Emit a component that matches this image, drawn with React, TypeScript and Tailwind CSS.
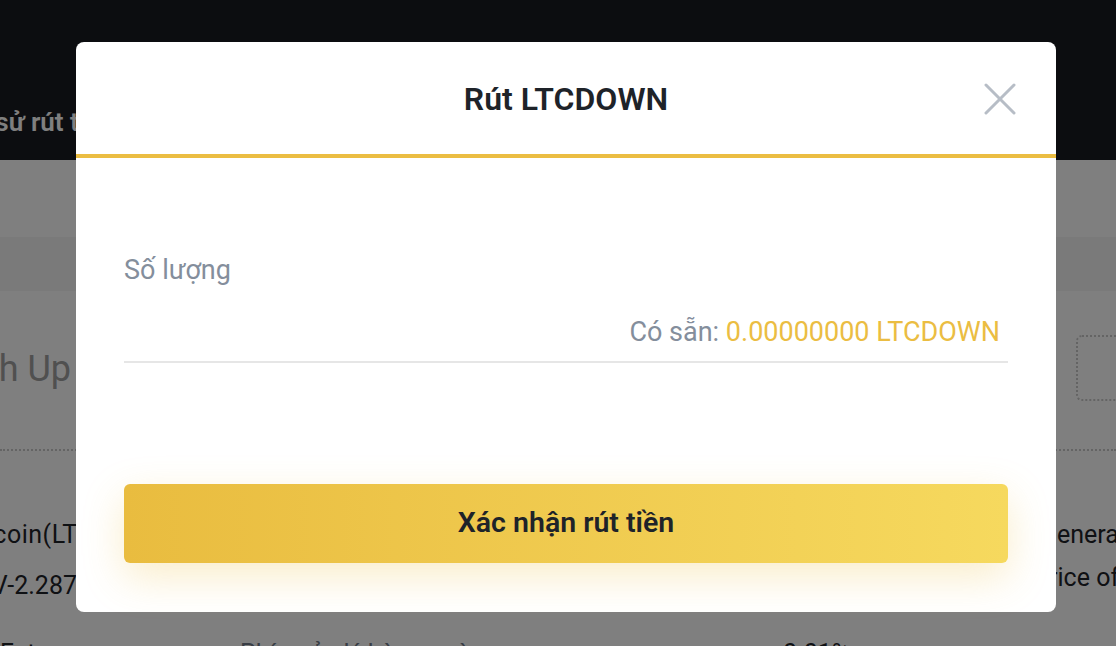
function BackgroundPage() {
  return (
    <div className="h-[646px] w-full overflow-hidden bg-white font-['Roboto',sans-serif]">
      {/* top header */}
      <div className="flex h-[160px] items-center bg-[#181a20] pt-[84px]">
        <div className="flex w-[114px] justify-end">
          <span className="shrink-0 whitespace-nowrap text-[26px] font-semibold text-white">Lịch sử rút tiền</span>
        </div>
      </div>
      <div className="h-[77px]" />
      <div className="h-[54px] bg-[#f5f5f5]" />

      {/* search row */}
      <div className="flex h-[160px] items-center justify-between border-b-2 border-dotted border-[#c8c8c8]">
        <div className="-mt-[2px] flex w-[71px] justify-end">
          <span className="shrink-0 whitespace-nowrap text-[36px] text-[#a0a0a0]">Tìm kiếm Flash Up</span>
        </div>
        <div className="-mr-[20px] mt-[-4px] h-[66px] w-[60px] rounded-md border-2 border-dotted border-[#c8c8c8]" />
      </div>

      {/* table rows */}
      <div className="flex justify-between pt-[65px] text-[25px] text-[#1e2329]">
        <div className="flex flex-col gap-[13px] whitespace-nowrap">
          <div className="flex w-[103px] justify-end">
            <span className="shrink-0 tracking-[0.5px]">Litecoin(LTC)</span>
          </div>
          <div className="flex w-[77px] justify-end">
            <span className="shrink-0">LTCDOWN-V-2.287</span>
          </div>
        </div>
        <div className="flex w-[73px] flex-col gap-[5px] whitespace-nowrap">
          <span>generated</span>
          <span className="-ml-[8px]">price of</span>
        </div>
      </div>
      <div className="mt-[31px] flex whitespace-nowrap text-[25px] text-[#1e2329]">
        <span className="w-[240px]">Futures</span>
        <span className="w-[543px] text-[#707a8a]">Phí quản lý hàng ngày</span>
        <span>0.01%</span>
      </div>
    </div>
  );
}

function WithdrawModal() {
  return (
    <div className="absolute left-[76px] top-[42px] w-[980px] rounded-lg bg-white font-['Roboto',sans-serif]">
      <div className="relative flex h-[116px] items-center justify-center border-b-4 border-[#ebbd42]">
        <h2 className="pt-[2px] text-[32px] font-semibold text-[#1e2329]">Rút LTCDOWN</h2>
        <button className="absolute right-[40px] top-[41px] text-[#b7bdc6]">
          <svg width="32" height="32" viewBox="0 0 32 32" fill="none" stroke="currentColor" strokeWidth="3" strokeLinecap="round">
            <line x1="2" y1="2" x2="30" y2="30" />
            <line x1="30" y1="2" x2="2" y2="30" />
          </svg>
        </button>
      </div>

      <div className="px-12 pt-[96px] pb-[49px]">
        <div className="h-8 text-[27px] leading-8 text-[#848e9c]">Số lượng</div>
        <div className="flex justify-end border-b-2 border-[#e6e6e6] pt-[30px] pb-[13px] pr-2">
          <span className="h-8 text-[27px] leading-8 text-[#848e9c]">
            Có sẵn: <span className="text-[#ebbd42]">0.00000000 LTCDOWN</span>
          </span>
        </div>
        <button className="mt-[121px] flex h-[79px] w-full items-center justify-center rounded-md bg-gradient-to-r from-[#e9bc3f] to-[#f6d95e] text-[28.5px] font-semibold text-[#1e2329] shadow-[0_14px_40px_rgba(236,190,66,0.28)]">
          Xác nhận rút tiền
        </button>
      </div>
    </div>
  );
}

export default function App() {
  return (
    <div className="relative h-[646px] w-[1116px] overflow-hidden">
      <BackgroundPage />
      <div className="absolute inset-0 bg-black/50" />
      <WithdrawModal />
    </div>
  );
}
